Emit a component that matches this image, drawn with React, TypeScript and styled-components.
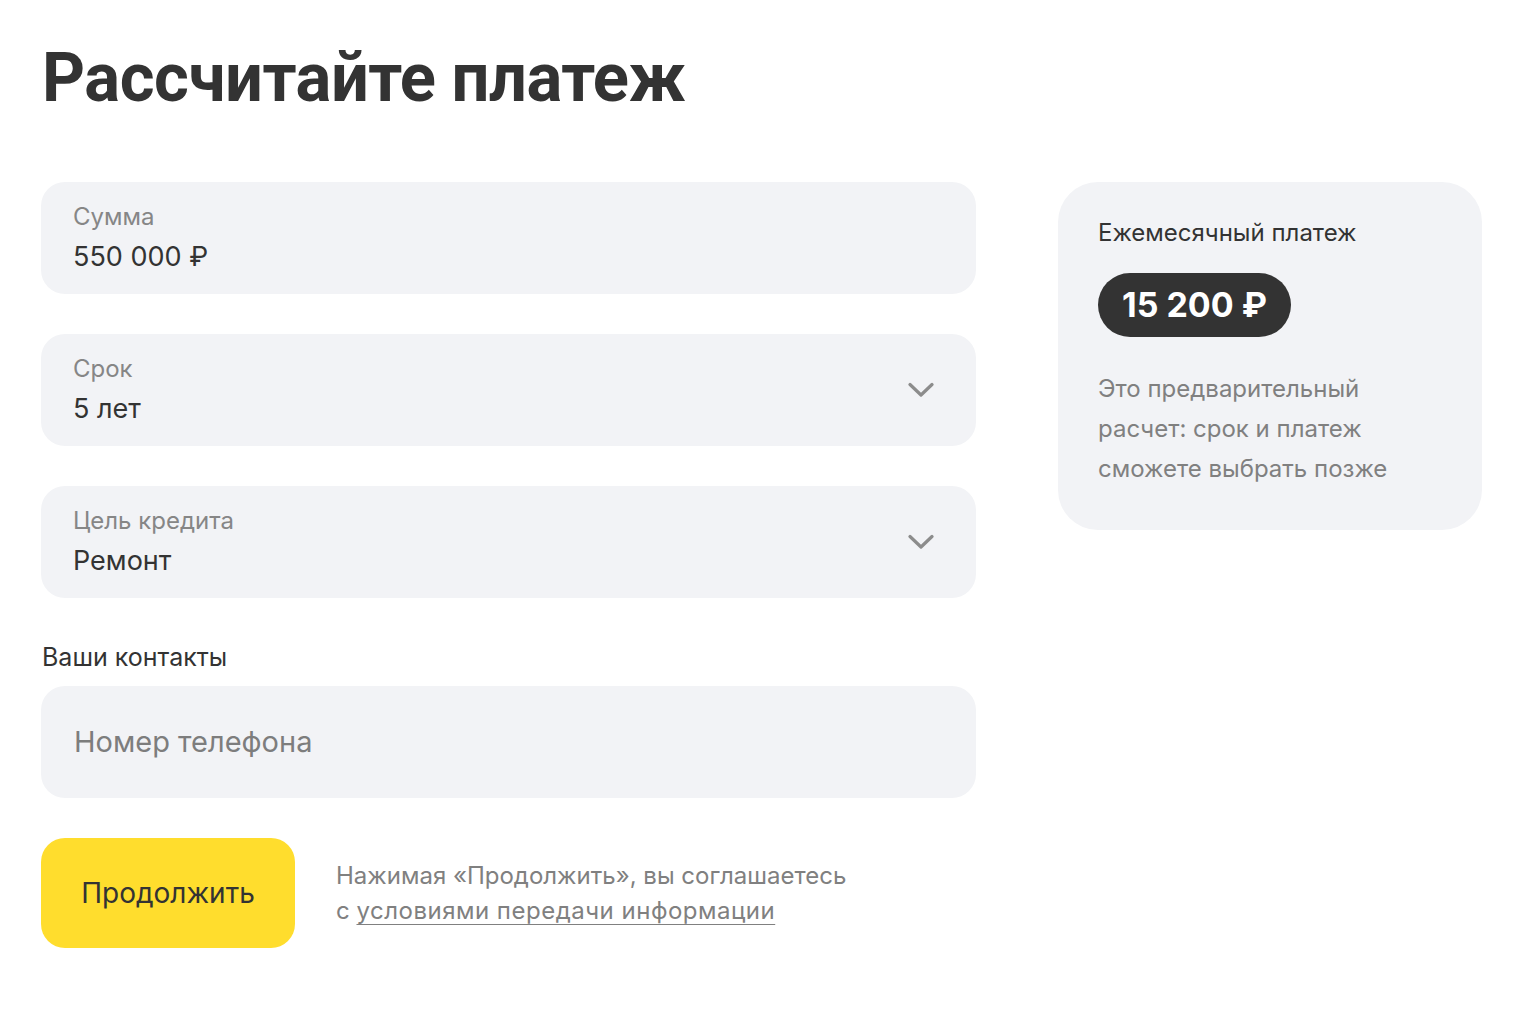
import React, { useLayoutEffect, useRef, useState } from "react";
import styled, { createGlobalStyle } from "styled-components";

const Global = createGlobalStyle`
  html, body { margin: 0; padding: 0; background: #fff; }
  body { font-family: Inter, "Noto Sans", sans-serif; color: #333; }
  * { box-sizing: border-box; }
`;

const Page = styled.div`
  width: 1520px;
  height: 1010px;
  padding: 38px 38px 0 41px;
`;

const Title = styled.h1`
  margin: 0 0 0 1px;
  height: 80px;
  font-family: Roboto, "Noto Sans", sans-serif;
  font-weight: 700;
  font-size: 68px;
  line-height: 80px;
  color: #333;
  white-space: nowrap;
`;

const TitleText = styled.span`
  display: inline-block;
  transform-origin: 0 50%;
  letter-spacing: -0.5px;
`;

const Columns = styled.div`
  display: flex;
  align-items: flex-start;
  gap: 82px;
  margin-top: 64px;
`;

const Form = styled.div`
  width: 935px;
  display: flex;
  flex-direction: column;
`;

const Field = styled.div<{ $mb?: number }>`
  height: 112px;
  border-radius: 24px;
  background: #f2f3f6;
  display: flex;
  align-items: center;
  padding: 0 42px 0 32px;
  margin-bottom: ${(p) => p.$mb ?? 40}px;
`;

const FieldBody = styled.div`
  flex: 1;
  display: flex;
  flex-direction: column;
  gap: 7px;
`;

const FieldLabel = styled.div`
  font-size: 24px;
  line-height: 30px;
  color: #868686;
`;

const FieldValue = styled.div`
  font-size: 27px;
  line-height: 36px;
  color: #333;
`;

const Placeholder = styled.div`
  font-size: 29px;
  line-height: 36px;
  color: #7d7d7d;
  padding-left: 1px;
`;

const SectionLabel = styled.div`
  font-size: 25px;
  line-height: 30px;
  color: #333;
  margin: 4px 0 14px 1px;
`;

const Chevron = () => (
  <svg width="26" height="16" viewBox="0 0 26 16" fill="none">
    <path d="M2 2.5 L13 13 L24 2.5" stroke="#8c8c8c" strokeWidth="3.2" strokeLinecap="round" strokeLinejoin="round" />
  </svg>
);

const Bottom = styled.div`
  display: flex;
  align-items: center;
  gap: 41px;
`;

const Button = styled.button`
  width: 254px;
  height: 110px;
  border: none;
  border-radius: 24px;
  background: #ffdd2d;
  font-family: Inter, "Noto Sans", sans-serif;
  font-size: 28px;
  color: #333;
  cursor: pointer;
`;

const Disclaimer = styled.div`
  font-size: 24px;
  line-height: 35px;
  color: #808080;
  a {
    color: #808080;
    text-decoration: underline;
    text-underline-offset: 5px;
    text-decoration-thickness: 1px;
    letter-spacing: 0.5px;
  }
`;

const Card = styled.div`
  width: 424px;
  height: 348px;
  border-radius: 40px;
  background: #f2f3f6;
  padding: 36px 40px 0 40px;
  display: flex;
  flex-direction: column;
  align-items: flex-start;
`;

const CardTitle = styled.div`
  font-size: 24px;
  line-height: 30px;
  color: #333;
`;

const Pill = styled.div`
  margin-top: 25px;
  height: 64px;
  border-radius: 32px;
  background: #333;
  color: #fff;
  font-weight: 700;
  font-size: 34px;
  line-height: 64px;
  padding: 0 24px;
`;

const CardText = styled.div`
  margin-top: 32px;
  font-size: 24px;
  line-height: 40px;
  color: #808080;
`;

const TITLE_WIDTH = 643;

export default function App() {
  const ref = useRef<HTMLSpanElement>(null);
  const [scale, setScale] = useState(1);
  useLayoutEffect(() => {
    if (ref.current) {
      const w = ref.current.offsetWidth;
      if (w > 0) setScale(TITLE_WIDTH / w);
    }
  }, []);
  return (
    <>
      <Global />
      <Page>
        <Title>
          <TitleText ref={ref} style={{ transform: `scaleX(${scale})` }}>
            Рассчитайте платеж
          </TitleText>
        </Title>
        <Columns>
          <Form>
            <Field>
              <FieldBody>
                <FieldLabel>Сумма</FieldLabel>
                <FieldValue>550 000 ₽</FieldValue>
              </FieldBody>
            </Field>
            <Field>
              <FieldBody>
                <FieldLabel>Срок</FieldLabel>
                <FieldValue>5 лет</FieldValue>
              </FieldBody>
              <Chevron />
            </Field>
            <Field $mb={40}>
              <FieldBody>
                <FieldLabel>Цель кредита</FieldLabel>
                <FieldValue>Ремонт</FieldValue>
              </FieldBody>
              <Chevron />
            </Field>
            <SectionLabel>Ваши контакты</SectionLabel>
            <Field $mb={40}>
              <Placeholder>Номер телефона</Placeholder>
            </Field>
            <Bottom>
              <Button>Продолжить</Button>
              <Disclaimer>
                Нажимая «Продолжить», вы соглашаетесь
                <br />с <a href="#">условиями передачи информации</a>
              </Disclaimer>
            </Bottom>
          </Form>
          <Card>
            <CardTitle>Ежемесячный платеж</CardTitle>
            <Pill>15 200 ₽</Pill>
            <CardText>
              Это предварительный
              <br />
              расчет: срок и платеж
              <br />
              сможете выбрать позже
            </CardText>
          </Card>
        </Columns>
      </Page>
    </>
  );
}
